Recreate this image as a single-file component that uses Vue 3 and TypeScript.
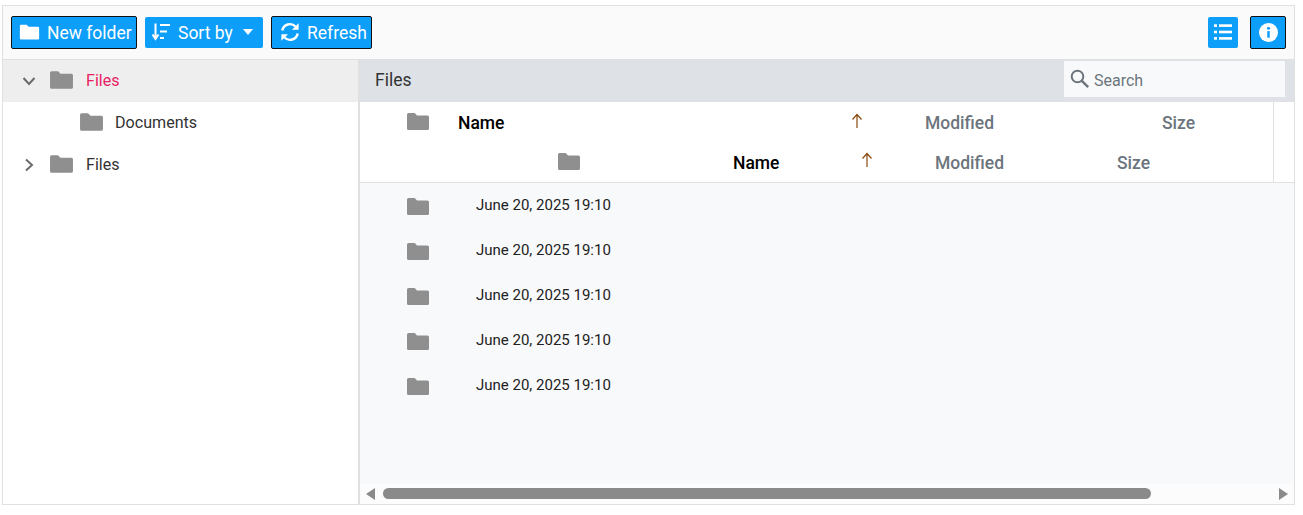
<script setup lang="ts">
const rows: string[] = Array(5).fill('June 20, 2025 19:10')
const folderPath = 'M2.5 3h6.2l2.3 2.4h10.5a1.5 1.5 0 0 1 1.5 1.5v11.6a1.5 1.5 0 0 1-1.5 1.5H2.5A1.5 1.5 0 0 1 1 18.5V4.500A1.5 1.5 0 0 1 2.5 3z'
</script>

<template>
  <div class="page">
    <div class="manager">
      <header class="toolbar">
        <button class="btn outlined new">
          <svg class="ico" width="21" height="21" viewBox="0 0 24 24"><path :d="folderPath" fill="#fff" /></svg>
          <span>New folder</span>
        </button>
        <button class="btn sort">
          <svg class="ico" width="18" height="18" viewBox="0 0 18 18" fill="none" stroke="#fff" stroke-width="2">
            <path d="M3.500 0.500v15M0.500 11.500l3 4.500 3-4.500" />
            <path d="M8 2h10M8 8.500h7M8 15h4" />
          </svg>
          <span>Sort by</span>
          <i class="caret"></i>
        </button>
        <button class="btn outlined refresh">
          <svg class="ico" width="20" height="20" viewBox="0 0 20 20" fill="none" stroke="#fff" stroke-width="2.400">
            <path d="M2.300 8.500A7.800 7.800 0 0 1 15.500 4.500" />
            <path d="M17.700 11.500A7.800 7.800 0 0 1 4.500 15.500" />
            <path d="M18.600 1.200v6.600h-6.600zM1.400 18.800v-6.600h6.600z" fill="#fff" stroke="none" />
          </svg>
          <span>Refresh</span>
        </button>
        <div class="spacer"></div>
        <button class="btn square">
          <svg width="18" height="16" viewBox="0 0 18 16" fill="#fff">
            <rect x="0" y="0.300" width="3" height="2.600" /><rect x="5" y="0.300" width="13" height="2.600" />
            <rect x="0" y="6.700" width="3" height="2.600" /><rect x="5" y="6.700" width="13" height="2.600" />
            <rect x="0" y="13.100" width="3" height="2.600" /><rect x="5" y="13.100" width="13" height="2.600" />
          </svg>
        </button>
        <button class="btn outlined info">
          <svg width="19" height="19" viewBox="0 0 20 20">
            <circle cx="10" cy="10" r="10" fill="#fff" />
            <rect x="8.700" y="8.500" width="2.600" height="7" fill="#0d9efa" />
            <circle cx="10" cy="5.600" r="1.600" fill="#0d9efa" />
          </svg>
        </button>
      </header>

      <div class="body">
        <aside class="tree">
          <div class="node active">
            <svg class="chev" width="14" height="14" viewBox="0 0 14 14" fill="none" stroke="#6b6b6b" stroke-width="2"><path d="M1.500 4l5.500 6 5.500-6" /></svg>
            <svg width="25" height="25" viewBox="0 0 24 24"><path :d="folderPath" fill="#8f8f8f" /></svg>
            <span class="label pink">Files</span>
          </div>
          <div class="node child">
            <svg width="25" height="25" viewBox="0 0 24 24"><path :d="folderPath" fill="#8f8f8f" /></svg>
            <span class="label">Documents</span>
          </div>
          <div class="node">
            <svg class="chev" width="14" height="14" viewBox="0 0 14 14" fill="none" stroke="#6b6b6b" stroke-width="2"><path d="M4 1.500l6 5.500-6 5.500" /></svg>
            <svg width="25" height="25" viewBox="0 0 24 24"><path :d="folderPath" fill="#8f8f8f" /></svg>
            <span class="label">Files</span>
          </div>
        </aside>

        <main class="content">
          <div class="crumb">
            <span class="crumb-title">Files</span>
            <label class="search">
              <svg width="20" height="20" viewBox="0 0 20 20" fill="none" stroke="#6c757d" stroke-width="2"><circle cx="7.500" cy="7.500" r="5.800" /><path d="M11.800 11.800l6.400 6.400" stroke-width="2.400" /></svg>
              <span>Search</span>
            </label>
          </div>

          <div class="thead">
            <div class="hrow first">
              <svg width="24" height="24" viewBox="0 0 24 24"><path :d="folderPath" fill="#8f8f8f" /></svg>
              <span class="name">Name</span>
              <svg class="arrow" width="12" height="16" viewBox="0 0 12 16" fill="none" stroke-width="1.200"><path d="M6 15V2M1.500 6.500L6 1.500l4.500 5" stroke="#8a4a10" /></svg>
              <span class="dim">Modified</span>
              <span class="dim">Size</span>
            </div>
            <div class="hrow second">
              <svg width="24" height="24" viewBox="0 0 24 24"><path :d="folderPath" fill="#8f8f8f" /></svg>
              <span class="name">Name</span>
              <svg class="arrow" width="12" height="16" viewBox="0 0 12 16" fill="none" stroke-width="1.200"><path d="M6 15V2M1.500 6.500L6 1.500l4.500 5" stroke="#8a4a10" /></svg>
              <span class="dim">Modified</span>
              <span class="dim">Size</span>
            </div>
            <div class="gutter"></div>
          </div>

          <div class="list">
            <div v-for="(d, i) in rows" :key="i" class="row">
              <svg width="24" height="24" viewBox="0 0 24 24"><path :d="folderPath" fill="#8f8f8f" /></svg>
              <span class="date">{{ d }}</span>
            </div>
          </div>

          <div class="hscroll">
            <i class="tri left"></i>
            <div class="track"><div class="thumb"></div></div>
            <i class="tri right"></i>
          </div>
        </main>
      </div>
    </div>
  </div>
</template>

<style>
html, body { margin: 0; background: #fff; }
</style>

<style scoped>
.page {
  width: 1303px;
  height: 515px;
  padding: 5px 8px 10px 2px;
  box-sizing: border-box;
  font-family: Roboto, "Liberation Sans", sans-serif;
}
.manager {
  height: 100%;
  border: 1px solid #e0e0e0;
  box-sizing: border-box;
  display: flex;
  flex-direction: column;
}
.toolbar {
  height: 54px;
  flex: none;
  box-sizing: border-box;
  background: #fafafa;
  border-bottom: 1px solid #e0e0e0;
  display: flex;
  align-items: center;
  padding: 0 8px 1px 8px;
  gap: 8px;
}
.spacer { flex: 1; }
.btn {
  height: 31px;
  box-sizing: border-box;
  border: 0;
  border-radius: 2px;
  background: #0d9efa;
  color: #fff;
  font: 400 17.500px Roboto, sans-serif;
  display: flex;
  align-items: center;
  padding: 0;
  justify-content: flex-start;
}
.btn span { margin-top: 2px; }
.outlined { height: 33px; border: 1px solid #111; }
.new { width: 126px; gap: 7px; padding-left: 7px; }
.sort { width: 118px; gap: 8px; padding-left: 7px; }
.refresh { width: 101px; gap: 7px; padding-left: 8px; }
.square { width: 30px; margin-right: 4px; justify-content: center; }
.info { width: 36px; justify-content: center; }
.ico { flex: none; }
.caret {
  width: 0;
  height: 0;
  margin-left: 2px;
  border-left: 5.500px solid transparent;
  border-right: 5.500px solid transparent;
  border-top: 6px solid #fff;
}
.body { flex: 1; display: flex; min-height: 0; }
.tree {
  width: 355px;
  flex: none;
  border-right: 2px solid #e0e0e0;
  background: #fff;
  color: #333;
}
.node {
  height: 42px;
  box-sizing: border-box;
  display: flex;
  align-items: center;
  padding: 0 0 2px 19px;
  font-size: 16.100px;
}
.node.active { background: #eee; }
.node.child { padding-left: 76px; }
.chev { width: 14px; margin: 2px 13px 0 0; flex: none; }
.label { margin-left: 12px; }
.child .label { margin-left: 11px; }
.pink { color: #e91e63; }
.content {
  flex: 1;
  min-width: 0;
  display: flex;
  flex-direction: column;
}
.crumb {
  height: 42px;
  flex: none;
  background: #dee2e6;
  display: flex;
  align-items: center;
  justify-content: space-between;
  padding: 0 9px 0 15px;
  box-sizing: border-box;
}
.crumb-title { font-size: 17.500px; color: #333; margin-top: -2px; }
.search {
  width: 221px;
  height: 36px;
  margin-top: -5px;
  background: #f8f9fa;
  display: flex;
  align-items: center;
  padding-left: 6px;
  box-sizing: border-box;
  gap: 4px;
  color: #6c757d;
  font-size: 16px;
}
.search span { margin-top: 4px; }
.thead {
  height: 81px;
  flex: none;
  background: #fff;
  border-bottom: 1px solid #e0e0e0;
  box-sizing: border-box;
  display: grid;
  grid-template-columns: 1fr 21px;
  grid-template-rows: 40px 40px;
}
.gutter { grid-column: 2; grid-row: 1 / 3; border-left: 1px solid #e0e0e0; }
.hrow {
  grid-column: 1;
  display: grid;
  align-items: center;
  font-size: 17.500px;
}
.first { grid-template-columns: 98px 393px 74px 237px 1fr; }
.second { grid-template-columns: 373px 128px 74px 182px 1fr; grid-row: 2; }
.first > svg:first-child { margin-left: 46px; justify-self: start; }
.second > svg:first-child { justify-self: start; margin-left: 197px; }
.name, .dim { margin-top: 2px; }
.name { font-weight: 500; color: #000; }
.dim { font-weight: 500; color: #6c757d; }
.arrow { margin-top: -4px; }
.first .arrow { margin-top: -2px; }
.list {
  flex: 1;
  min-height: 0;
  background: #f8f9fa;
}
.row {
  height: 45px;
  display: flex;
  align-items: center;
  padding-left: 46px;
}
.row svg { margin-top: 2px; }
.date { margin-left: 46px; margin-top: -2px; font-size: 15px; color: #222; }
.hscroll {
  height: 20px;
  flex: none;
  box-sizing: border-box;
  background: #fcfcfc;
  display: flex;
  align-items: center;
  padding: 0 6px 1px 6px;
}
.tri { width: 0; height: 0; border-top: 6px solid transparent; border-bottom: 6px solid transparent; flex: none; }
.tri.left { border-right: 9px solid #8a8a8a; }
.tri.right { border-left: 9px solid #8a8a8a; }
.track { flex: 1; padding: 0 8px; min-width: 0; }
.thumb { width: 768px; height: 11px; border-radius: 6px; background: #8a8a8a; }
</style>
